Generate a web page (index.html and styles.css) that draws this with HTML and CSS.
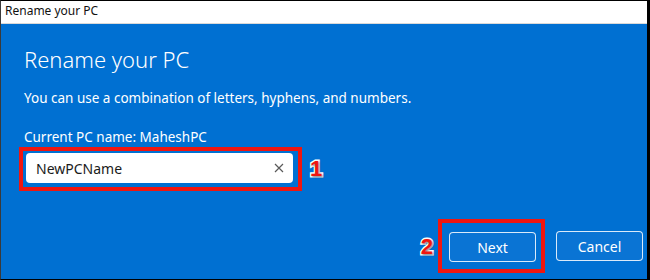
FILE: index.html
```html
<!DOCTYPE html>
<html>
<head>
  <title>Rename your PC</title>
  <link rel="stylesheet" href="styles.css">
</head>
<body>
  <div class="window">
    <div class="titlebar">Rename your PC</div>
    <div class="content">
      <h1>Rename your PC</h1>
      <p class="hint">You can use a combination of letters, hyphens, and numbers.</p>
      <p class="current">Current PC name: MaheshPC</p>
      <div class="inputRow">
        <div class="mark">
          <div class="nameBox">
            <span>NewPCName</span>
            <svg width="10" height="10" viewBox="0 0 10 10">
              <path d="M1 1 L9 9 M9 1 L1 9" stroke="#5a5a5a" stroke-width="1.2" fill="none"/>
            </svg>
          </div>
        </div>
        <span class="step">1</span>
      </div>
      <div class="buttons">
        <span class="step">2</span>
        <div class="mark markButton">
          <button class="btn">Next</button>
        </div>
        <button class="btn">Cancel</button>
      </div>
    </div>
  </div>
</body>
</html>
```

FILE: styles.css
```css
* {
  margin: 0;
  padding: 0;
  box-sizing: border-box;
}

body {
  width: 650px;
  height: 280px;
  background: #000;
  font-family: "Noto Sans", "Open Sans", sans-serif;
}

.window {
  width: 650px;
  height: 280px;
  display: flex;
  flex-direction: column;
  border-top: 1px solid #000;
  border-right: 3px solid #000;
  border-bottom: 1px solid #000;
  border-left: 1px solid #3a3a3a;
}

.titlebar {
  height: 23px;
  background: #fff;
  border-bottom: 1px solid #d9d9d9;
  padding-left: 4px;
  font-size: 12px;
  line-height: 20px;
  color: #111;
}

.content {
  flex: 1;
  display: flex;
  flex-direction: column;
  background: #0070d2;
  color: #fff;
  padding: 20px 0 6px 23px;
}

h1 {
  font-size: 22px;
  font-weight: 300;
  line-height: 30px;
}

.hint {
  margin-top: 14px;
  font-size: 13.5px;
  line-height: 20px;
}

.current {
  margin-top: 19px;
  font-size: 13.5px;
  line-height: 20px;
}

.inputRow {
  display: flex;
  align-items: center;
  margin-left: -5px;
}

.mark {
  border: 4px solid #f0160f;
}

.inputRow .mark {
  padding: 2px 5px 4px 3px;
}

.nameBox {
  width: 267px;
  height: 30px;
  background: #fff;
  border-radius: 4px;
  display: flex;
  align-items: center;
  justify-content: space-between;
  padding: 0 9px 0 10px;
  font-size: 14px;
  color: #1a1a1a;
}

.step {
  font-family: "Liberation Sans", Arial, sans-serif;
  font-weight: bold;
  font-size: 22px;
  color: #f0160f;
  -webkit-text-stroke: 3px #fff;
  paint-order: stroke fill;
  text-shadow: 1px 1px 2px rgba(0, 0, 0, 0.5);
  margin-left: 8px;
}

.buttons {
  margin-top: auto;
  display: flex;
  align-items: center;
  justify-content: flex-end;
  padding-right: 4px;
}

.buttons .step {
  margin-right: 5px;
  margin-top: 2px;
}

.markButton {
  padding: 9px 5px 7px 7px;
  margin-right: 11px;
}

.btn {
  width: 87px;
  height: 30px;
  background: #0a74d4;
  color: #fff;
  border: 1.5px solid rgba(255, 255, 255, 0.85);
  border-radius: 4px;
  font-family: "Noto Sans", "Open Sans", sans-serif;
  font-size: 14px;
}
```
